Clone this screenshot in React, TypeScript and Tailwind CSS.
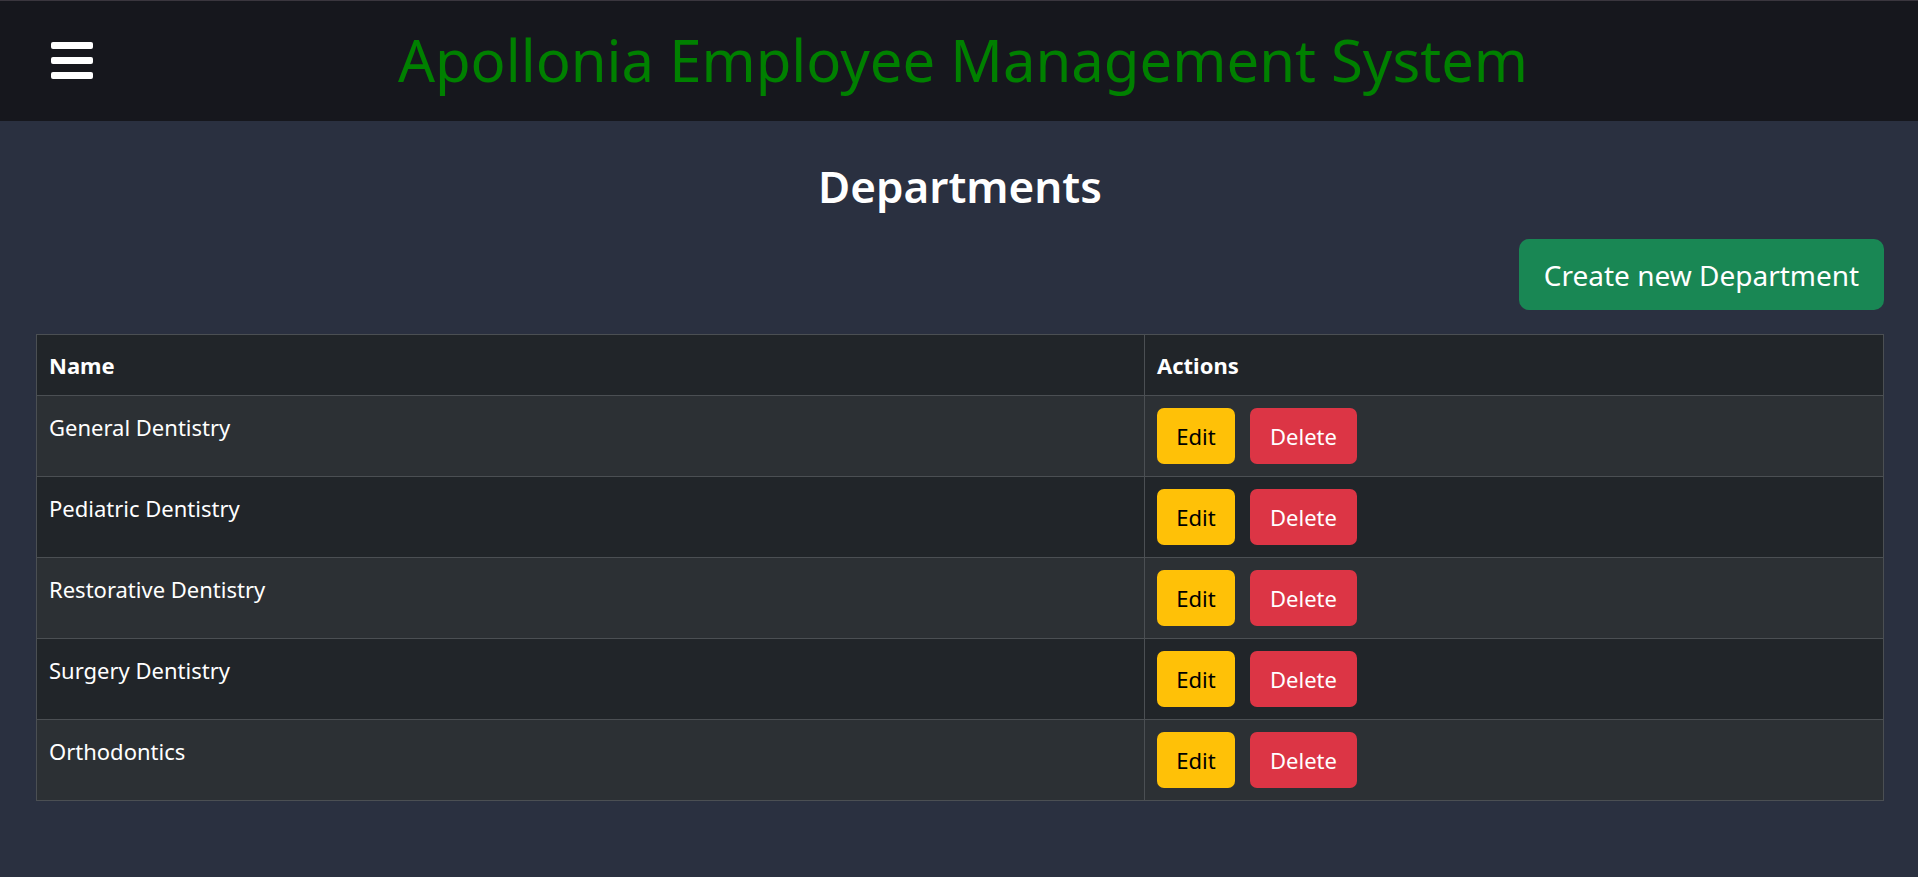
const departments = [
  "General Dentistry",
  "Pediatric Dentistry",
  "Restorative Dentistry",
  "Surgery Dentistry",
  "Orthodontics",
];

function MenuIcon() {
  return (
    <button className="absolute left-[51px] top-[41px] flex flex-col gap-[8px]">
      <span className="h-[7px] w-[42px] rounded-[2px] bg-white" />
      <span className="h-[7px] w-[42px] rounded-[2px] bg-white" />
      <span className="h-[7px] w-[42px] rounded-[2px] bg-white" />
    </button>
  );
}

export default function App() {
  return (
    <div className="min-h-[877px] bg-[#2a3040] font-['Noto_Sans',sans-serif] text-white">
      <header className="relative flex h-[121px] items-center justify-center border-t border-[#3a363e] bg-[#16171d] pl-[8px]">
        <MenuIcon />
        <h1 className="mb-[2px] text-[58px] leading-none text-[#008000]">Apollonia Employee Management System</h1>
      </header>

      <main className="pl-[36px] pr-[34px]">
        <h2 className="mt-[43px] text-center text-[44px] font-semibold leading-none">Departments</h2>

        <div className="mt-[31px] flex justify-end">
          <button className="flex h-[71px] w-[365px] items-center justify-center rounded-[10px] bg-[#198754] text-[28px] text-white">
            Create new Department
          </button>
        </div>

        <div className="mt-[24px] border border-[#4b4f53] text-[22px]">
          <div className="grid h-[60px] grid-cols-[1108px_1fr] bg-[#212529] font-bold">
            <div className="flex items-center border-r border-[#4b4f53] px-[12px]">Name</div>
            <div className="flex items-center px-[12px]">Actions</div>
          </div>
          {departments.map((name, i) => (
            <div
              key={name}
              className={`grid h-[81px] grid-cols-[1108px_1fr] border-t border-[#4b4f53] ${
                i % 2 === 0 ? "bg-[#2c3034]" : "bg-[#212529]"
              }`}
            >
              <div className="border-r border-[#4b4f53] px-[12px] pt-[15px] leading-normal">{name}</div>
              <div className="flex items-center gap-[15px] px-[12px]">
                <button className="h-[56px] w-[78px] rounded-[7px] bg-[#ffc107] text-black">Edit</button>
                <button className="h-[56px] w-[107px] rounded-[7px] bg-[#dc3545] text-white">Delete</button>
              </div>
            </div>
          ))}
        </div>
      </main>
    </div>
  );
}
